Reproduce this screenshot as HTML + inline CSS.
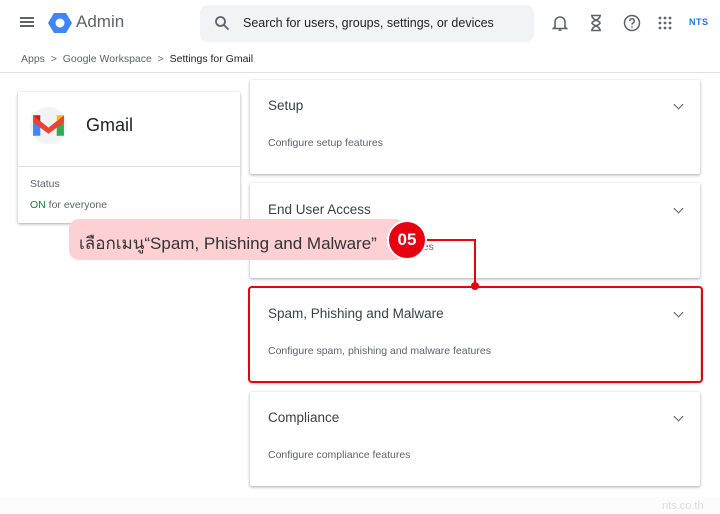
<!DOCTYPE html>
<html><head><meta charset="utf-8"><style>
*{box-sizing:border-box;margin:0;padding:0}
body{width:720px;height:514px;background:#fff;font-family:"Liberation Sans",sans-serif;position:relative;overflow:hidden;color:#202124}
.abs{position:absolute}
.card{position:absolute;background:#fff;box-shadow:0 1px 2px rgba(60,64,67,.3),0 1px 3px 1px rgba(60,64,67,.12);border-radius:2px}
.card .t{position:absolute;left:18px;top:18px;font-size:13.5px;color:#3c4043}
.card .s{position:absolute;left:18px;font-size:10.5px;color:#5f6368}
.chev{position:absolute;right:18px;top:20px;width:7px;height:7px;border-right:1.6px solid #5f6368;border-bottom:1.6px solid #5f6368;transform:rotate(45deg)}
</style></head><body>
<div class="abs" style="left:20px;top:17px;width:14px;height:2px;background:#5f6368;box-shadow:0 4px 0 #5f6368,0 8px 0 #5f6368"></div>
<svg class="abs" style="left:48px;top:12px" width="24" height="22" viewBox="0 0 24 22"><polygon points="6,1 18,1 24,11 18,21 6,21 0,11" fill="#4285f4"/><circle cx="12" cy="11" r="4.5" fill="#fff"/></svg>
<div class="abs" style="left:76px;top:12px;font-size:17px;color:#5f6368">Admin</div>
<div class="abs" style="left:200px;top:5px;width:334px;height:37px;background:#f1f3f4;border-radius:8px"></div>
<svg class="abs" style="left:214px;top:15px" width="16" height="16" viewBox="0 0 16 16"><circle cx="6.5" cy="6.5" r="4.5" fill="none" stroke="#5f6368" stroke-width="1.8"/><line x1="10" y1="10" x2="14.5" y2="14.5" stroke="#5f6368" stroke-width="1.8"/></svg>
<div class="abs" style="left:243px;top:16px;font-size:12.5px;color:#202124">Search for users, groups, settings, or devices</div>
<svg class="abs" style="left:552px;top:14px" width="16" height="18" viewBox="0 0 16 18"><path d="M3 13V8a5 5 0 0 1 10 0v5l1.5 1.5h-13z" fill="none" stroke="#5f6368" stroke-width="1.6"/><path d="M6.5 16h3" stroke="#5f6368" stroke-width="1.6"/></svg>
<svg class="abs" style="left:589px;top:14px" width="14" height="18" viewBox="0 0 14 18"><path d="M2 1.5h10M2 16.5h10M3 1.5c0 5 8 5 8 7.5s-8 2.5-8 7.5M11 1.5c0 5-8 5-8 7.5s8 2.5 8 7.5" fill="none" stroke="#5f6368" stroke-width="1.6"/></svg>
<svg class="abs" style="left:623px;top:14px" width="18" height="18" viewBox="0 0 18 18"><circle cx="9" cy="9" r="7.5" fill="none" stroke="#5f6368" stroke-width="1.5"/><path d="M6.7 7a2.3 2.3 0 1 1 3 2.2c-.6.3-.7.7-.7 1.5" fill="none" stroke="#5f6368" stroke-width="1.5"/><circle cx="9" cy="13" r=".9" fill="#5f6368"/></svg>
<svg class="abs" style="left:658px;top:16px" width="14" height="14" viewBox="0 0 14 14" fill="#5f6368"><circle cx="2" cy="2" r="1.4"/><circle cx="7" cy="2" r="1.4"/><circle cx="12" cy="2" r="1.4"/><circle cx="2" cy="7" r="1.4"/><circle cx="7" cy="7" r="1.4"/><circle cx="12" cy="7" r="1.4"/><circle cx="2" cy="12" r="1.4"/><circle cx="7" cy="12" r="1.4"/><circle cx="12" cy="12" r="1.4"/></svg>
<div class="abs" style="left:689px;top:17px;font-size:9px;font-weight:bold;color:#1a73e8;letter-spacing:.5px">NTS</div>
<div class="abs" style="left:21px;top:53px;font-size:10.5px;color:#5f6368">Apps &nbsp;&gt;&nbsp; Google Workspace &nbsp;&gt;&nbsp; <span style="color:#202124">Settings for Gmail</span></div>
<div class="abs" style="left:0;top:72px;width:720px;height:1px;background:#e0e0e0"></div>
<div class="abs" style="left:0;top:497px;width:720px;height:17px;background:#fcfcfc"></div>
<div class="abs" style="left:662px;top:500px;font-size:11px;color:#ddd">nts.co.th</div>
<div class="card" style="left:18px;top:92px;width:222px;height:131px">
<div class="abs" style="left:12px;top:15px;width:37px;height:37px;border-radius:50%;background:#f1f3f4"></div>
<svg class="abs" style="left:12px;top:19px" width="37" height="28" viewBox="0 0 36 27"><path d="M3 4v20h7V11z" fill="#4285f4"/><path d="M33 4v20h-7V11z" fill="#34a853"/><path d="M3 4l15 12 15-12v7L18 22 3 11z" fill="#ea4335"/><path d="M3 4l7 6V4z" fill="#c5221f"/><path d="M33 4l-7 6V4z" fill="#fbbc04"/></svg>
<div class="abs" style="left:68px;top:23px;font-size:18px;color:#202124">Gmail</div>
<div class="abs" style="left:0;top:74px;width:222px;height:1px;background:#e0e0e0"></div>
<div class="abs" style="left:12px;top:86px;font-size:10.5px;color:#5f6368">Status</div>
<div class="abs" style="left:12px;top:107px;font-size:10.5px;color:#5f6368"><span style="color:#188038">ON</span> for everyone</div>
</div>
<div class="card" style="left:250px;top:80px;width:450px;height:94px"><div class="t" style="top:18px">Setup</div><div class="chev" style="top:21px"></div><div class="s" style="top:57px">Configure setup features</div></div>
<div class="card" style="left:250px;top:183px;width:450px;height:95px"><div class="t" style="top:19px">End User Access</div><div class="chev" style="top:22px"></div><div class="s" style="top:58px">Configure end user access features</div></div>
<div class="card" style="left:250px;top:288px;width:450px;height:94px"><div class="t" style="top:18px">Spam, Phishing and Malware</div><div class="chev" style="top:21px"></div><div class="s" style="top:57px">Configure spam, phishing and malware features</div></div>
<div class="abs" style="left:248px;top:286px;width:455px;height:97px;border:2px solid #e60012;border-radius:4px"></div>
<div class="card" style="left:250px;top:392px;width:450px;height:94px"><div class="t" style="top:18px">Compliance</div><div class="chev" style="top:21px"></div><div class="s" style="top:57px">Configure compliance features</div></div>
<div class="abs" style="left:69px;top:219px;width:336px;height:41px;background:#fdd0d3;border-radius:10px"></div>
<div class="abs" style="left:79px;top:230px;font-size:17px;color:#333;font-family:'Liberation Sans','DejaVu Sans',sans-serif;white-space:nowrap">เลือกเมนู“Spam, Phishing and Malware”</div>
<div class="abs" style="left:425px;top:239px;width:51px;height:2px;background:#e60012"></div>
<div class="abs" style="left:474px;top:239px;width:2px;height:47px;background:#e60012"></div>
<div class="abs" style="left:471px;top:282px;width:8px;height:8px;border-radius:50%;background:#e60012"></div>
<div class="abs" style="left:387px;top:220px;width:40px;height:40px;border-radius:50%;background:#e60012;border:2px solid #fff;color:#fff;font-weight:bold;font-size:17px;text-align:center;line-height:36px">05</div>
</body></html>
